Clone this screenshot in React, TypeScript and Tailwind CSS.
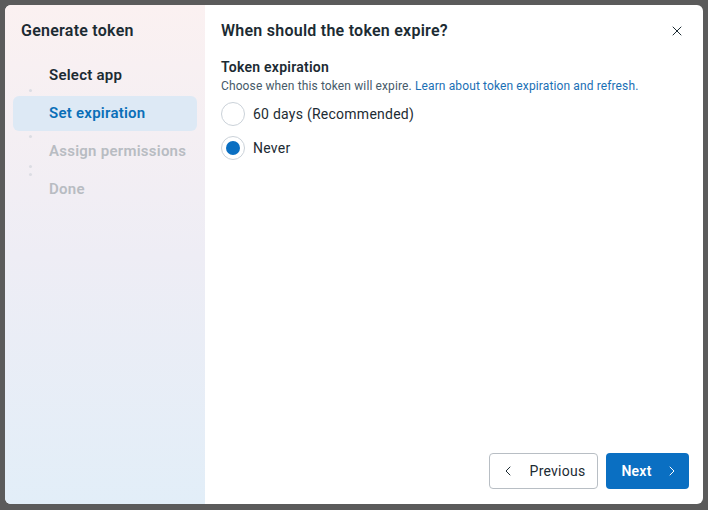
import { X, ChevronLeft, ChevronRight } from 'lucide-react';

const steps = [
  { label: 'Select app', state: 'done' },
  { label: 'Set expiration', state: 'active' },
  { label: 'Assign permissions', state: 'todo' },
  { label: 'Done', state: 'todo' },
];

function Radio({ checked, label }: { checked: boolean; label: string }) {
  return (
    <label className="flex items-center gap-2 h-[34px] cursor-pointer">
      <span className="w-6 h-6 rounded-full border border-[#cbd2d9] bg-white flex items-center justify-center">
        {checked && <span className="w-[14px] h-[14px] rounded-full bg-[#0a6fc2]" />}
      </span>
      <span className="text-[14px] text-[#1c2b33]">{label}</span>
    </label>
  );
}

export default function App() {
  return (
    <div className="w-[708px] h-[510px] bg-[#5b5b5b] p-[5px] pb-[6px] tracking-[0.25px]" style={{ fontFamily: 'Roboto, "Noto Sans", sans-serif' }}>
      <div className="flex h-full rounded-md overflow-hidden bg-white">
        {/* 사이드바 */}
        <div className="w-[200px] shrink-0 bg-gradient-to-b from-[#fbf1f1] via-[#eeedf5] to-[#e2eef8] px-2 pt-[12px]">
          <h2 className="px-2 text-[16px] font-semibold text-[#1c2b33] leading-[28px]">Generate token</h2>
          <div className="relative mt-[13px] flex flex-col gap-[3px]">
            {steps.map((s) => (
              <div
                key={s.label}
                className={
                  'h-[35px] rounded-md pl-[36px] flex items-center text-[15px] font-semibold ' +
                  (s.state === 'active' ? 'bg-[#dde9f5] text-[#0a6fb8]' : s.state === 'done' ? 'text-[#1c2b33]' : 'text-[#b8bcc2]')
                }
              >
                {s.label}
              </div>
            ))}
            <span className="absolute left-[16px] top-[31px] w-[3px] h-[3px] rounded-full bg-[#dcdde3]" />
            <span className="absolute left-[16px] top-[77px] w-[3px] h-[3px] rounded-full bg-[#dcdde3]" />
            <span className="absolute left-[16px] top-[107px] w-[3px] h-[3px] rounded-full bg-[#dcdde3]" />
            <span className="absolute left-[16px] top-[115px] w-[3px] h-[3px] rounded-full bg-[#dcdde3]" />
          </div>
        </div>

        {/* 본문 */}
        <div className="flex-1 flex flex-col pl-4 pr-[14px] pt-[12px] pb-[15px]">
          <div className="flex items-center justify-between h-[28px]">
            <h1 className="text-[16px] font-semibold text-[#1c2b33]">When should the token expire?</h1>
            <X className="w-[16px] h-[16px] text-[#1c2b33] mr-[4px]" strokeWidth={1.5} />
          </div>
          <div className="mt-[13px]">
            <div className="text-[14px] font-semibold text-[#1c2b33] leading-[18px]">Token expiration</div>
            <p className="mt-[1px] text-[12px] text-[#465a69] leading-[18px] tracking-[0.12px]">
              Choose when this token will expire.{' '}
              <a className="text-[#1a6fb5]">Learn about token expiration and refresh.</a>
            </p>
            <div className="mt-[2px] flex flex-col">
              <Radio checked={false} label="60 days (Recommended)" />
              <Radio checked label="Never" />
            </div>
          </div>
          <div className="mt-auto flex justify-end gap-2">
            <button className="h-9 w-[109px] rounded border border-[#b8bec4] flex items-center justify-center gap-[14px] text-[14px] text-[#1c2b33] pr-[2px]">
              <ChevronLeft className="w-4 h-4" strokeWidth={1.5} />
              Previous
            </button>
            <button className="h-9 w-[83px] rounded bg-[#0a6fc2] flex items-center justify-center gap-[12px] text-[14px] font-semibold text-white pl-[6px]">
              Next
              <ChevronRight className="w-4 h-4" strokeWidth={1.5} />
            </button>
          </div>
        </div>
      </div>
    </div>
  );
}
